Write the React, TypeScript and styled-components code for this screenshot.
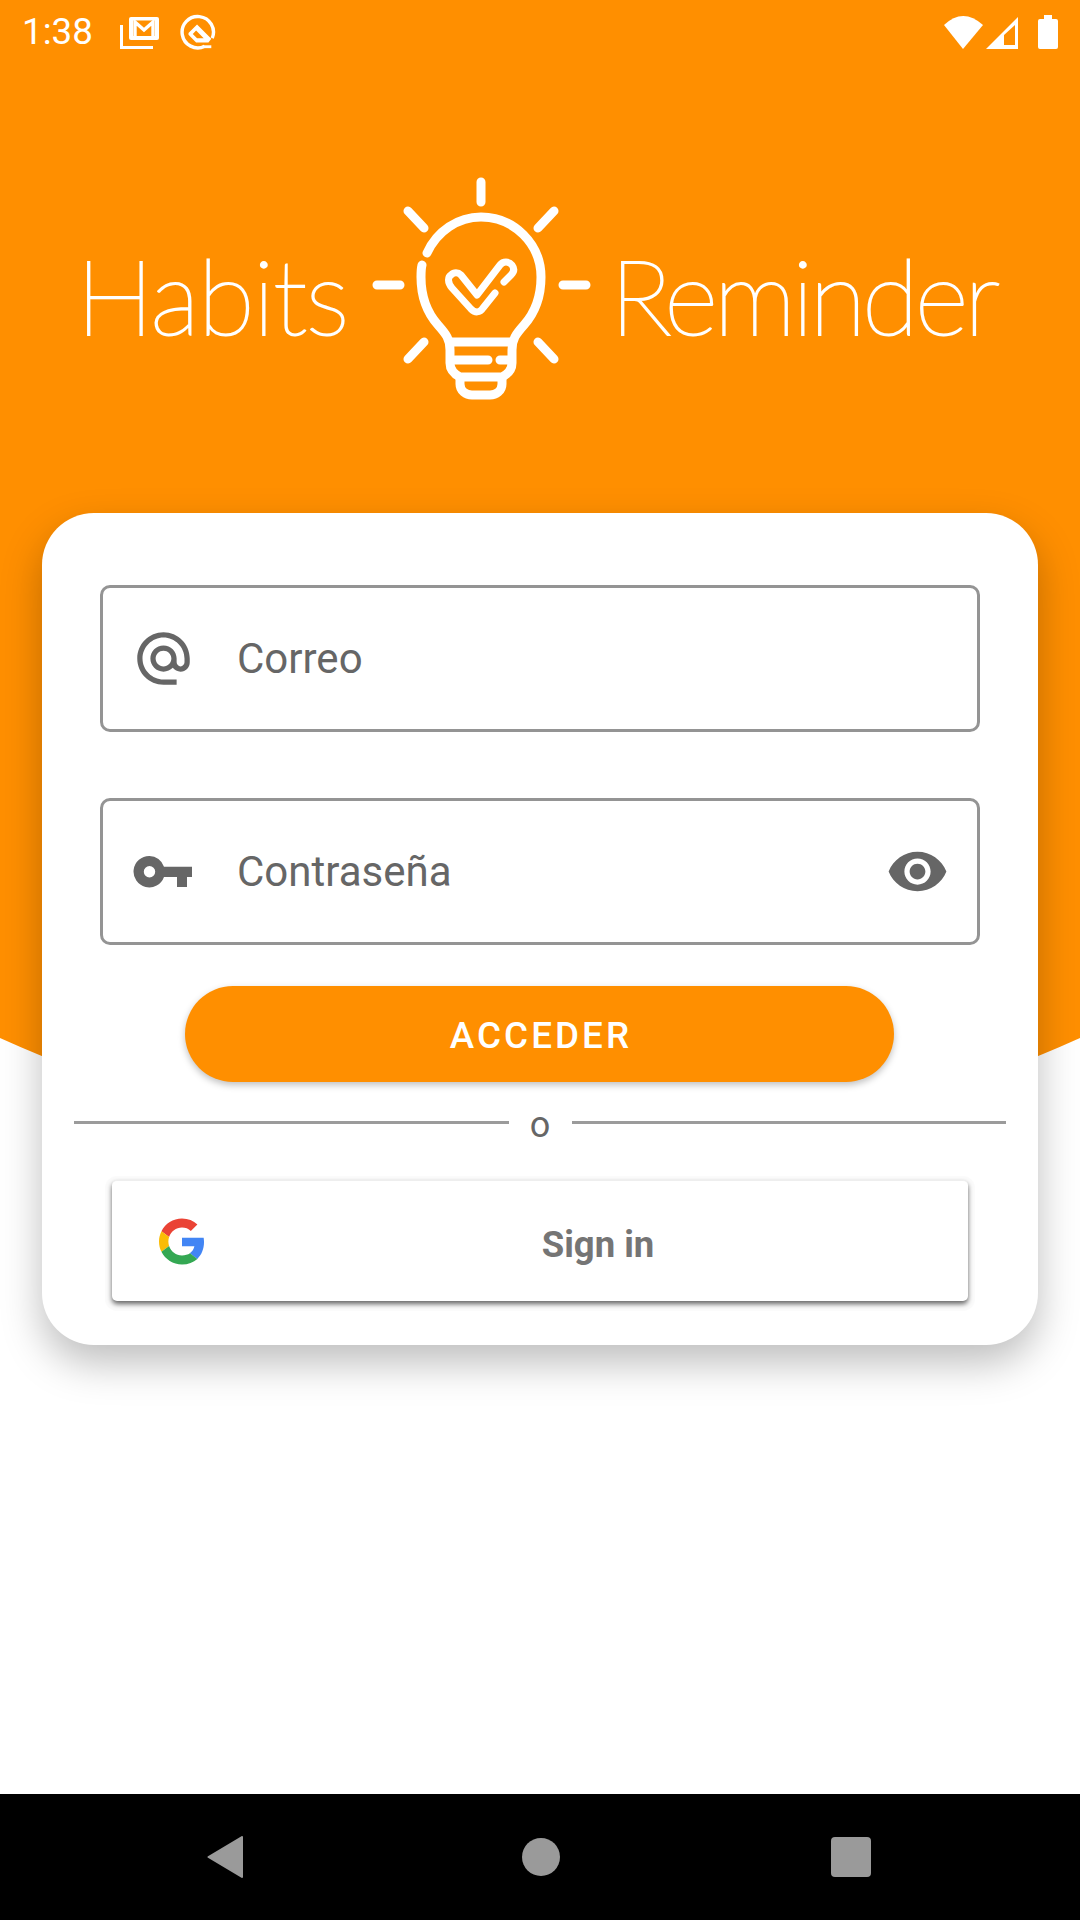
import React from "react";
import styled, { createGlobalStyle } from "styled-components";
import { MdAlternateEmail, MdVisibility } from "react-icons/md";

const Global = createGlobalStyle`
  html, body { margin: 0; padding: 0; background: #fff; }
  * { box-sizing: border-box; }
`;

const Page = styled.div`
  position: relative;
  width: 1080px;
  height: 1920px;
  overflow: hidden;
  display: flex;
  flex-direction: column;
  background: #fff;
  font-family: Roboto, "Liberation Sans", sans-serif;
`;

const Backdrop = styled.div`
  position: absolute;
  top: 0;
  left: -360px;
  width: 1800px;
  height: 1147px;
  background: #ff8f00;
  border-radius: 0 0 900px 900px / 0 0 545px 545px;
`;

const StatusBar = styled.div`
  position: relative;
  height: 63px;
  display: flex;
  align-items: center;
  padding: 0 21px 0 22px;
  color: #fff;
`;

const Clock = styled.span`
  font-size: 36.75px;
  line-height: 63px;
  width: 98px;
`;

const StatusIcon = styled.svg`
  display: block;
  flex: none;
`;

const Spring = styled.div`
  flex: 1;
`;

const Header = styled.div`
  position: relative;
  height: 450px;
  display: flex;
  align-items: flex-start;
  padding: 107px 0 0 76px;
`;

const Word = styled.div<{ $width: number; $gap?: number; $tracking: number }>`
  width: ${(p) => p.$width}px;
  margin-left: ${(p) => p.$gap ?? 0}px;
  margin-top: 62px;
  font-family: Lato, sans-serif;
  font-weight: 100;
  font-size: 104px;
  line-height: 125px;
  letter-spacing: ${(p) => p.$tracking}px;
  color: #fff;
  -webkit-text-stroke: 2px #fff;
  white-space: nowrap;
`;

const Card = styled.div`
  position: relative;
  margin: 0 42px;
  height: 832px;
  padding: 72px 58px 0;
  border-radius: 52px;
  background: #fff;
  box-shadow: 0 18px 40px rgba(0, 0, 0, 0.26);
`;

const Field = styled.div<{ $gap?: number }>`
  height: 147px;
  margin-top: ${(p) => p.$gap ?? 0}px;
  display: flex;
  align-items: center;
  padding: 0 28px 0 29px;
  border: 3px solid #949494;
  border-radius: 10px;
  color: #666;
  svg { flex: none; display: block; }
`;

const Hint = styled.span`
  flex: 1;
  margin-left: 42px;
  font-size: 42px;
  color: #666;
`;

const PrimaryButton = styled.button`
  display: block;
  width: 709px;
  height: 96px;
  margin: 41px 0 0 85px;
  padding: 2px 0 0 3px;
  border: 0;
  border-radius: 48px;
  background: #ff8f00;
  color: #fff;
  font-family: Roboto, sans-serif;
  font-weight: 500;
  font-size: 36.75px;
  letter-spacing: 3.1px;
  box-shadow: 0 3px 7px rgba(0, 0, 0, 0.25);
`;

const DividerRow = styled.div`
  display: flex;
  align-items: flex-start;
  height: 98px;
  margin: 0 -26px;
  padding-top: 39px;
`;

const Rule = styled.div`
  flex: 1;
  height: 3px;
  background: #9b9b9b;
`;

const Or = styled.span`
  width: 63px;
  margin-top: -17px;
  text-align: center;
  font-size: 36px;
  line-height: 42px;
  color: #666;
`;

const GoogleButton = styled.button`
  position: relative;
  display: flex;
  align-items: center;
  width: 856px;
  height: 121px;
  margin-left: 12px;
  padding: 0 0 0 47px;
  border: 0;
  border-top: 1px solid #eee;
  border-radius: 5px;
  background: #fff;
  box-shadow: 0 3px 5px rgba(0, 0, 0, 0.6), 0 3px 0 7px #fbfbfb;
`;

const GoogleLabel = styled.span`
  flex: 1;
  padding: 7px 0 0 23px;
  text-align: center;
  font-family: Roboto, sans-serif;
  font-weight: 700;
  font-size: 36.5px;
  color: #757575;
`;

const NavBar = styled.div`
  margin-top: auto;
  height: 126px;
  background: #000;
  display: flex;
  align-items: center;
  justify-content: space-between;
  padding: 0 209px 0 207px;
  position: relative;
`;

const HomeDot = styled.div`
  width: 38px;
  height: 38px;
  margin-left: 8px;
  border-radius: 50%;
  background: #9a9a9a;
`;

const RecentSquare = styled.div`
  width: 40px;
  height: 40px;
  border-radius: 4px;
  background: #9a9a9a;
`;

const BulbLogo = () => (
  <StatusIcon width="222" height="235" viewBox="370 170 222 235" fill="none" stroke="#fff" strokeWidth="9" strokeLinecap="round" strokeLinejoin="round">
    <path d="M481 182V202M408 211L424 228M554 211L538 228M377 285H400M563 285H586M424 342L408 359M538 342L554 359" />
    <path d="M427 253C437 231 458 217 481 217C514 217 541 244 541 277C541 300 532 316 524 325C516 334 512 339 512 350V363C512 370 508 374 502 377H460C454 374 450 370 450 363V350C450 339 446 334 438 325C430 316 421 300 421 277C421 273 421 269 422 265" />
    <path d="M450 342H512M455 360H488M500 360H510M460 378V384C460 391 466 395 472 395H490C496 395 502 391 502 384V378" />
    <path strokeWidth="7" d="M495 293L483 308C480 313 475 313 471 309L452 288C447 282 448 277 451 275C454 272 458 272 461 275L477 295L500 265C503 261 509 261 512 265C515 269 514 272 511 275L504 282" />
  </StatusIcon>
);

const KeyIcon = () => (
  <StatusIcon width="63" height="63" viewBox="0 0 63 63">
    <path
      fill="#666"
      fillRule="evenodd"
      d="M17.500 16A15.700 15.700 0 0 1 32 26.700H60V37H55V47H45V37H32A15.700 15.700 0 1 1 17.500 16ZM17.500 26A5.700 5.700 0 1 0 17.500 37.400A5.700 5.700 0 1 0 17.500 26Z"
    />
  </StatusIcon>
);

const GoogleG = () => (
  <StatusIcon width="46" height="47" viewBox="0 0 48 48">
    <path fill="#EA4335" d="M24 9.5c3.54 0 6.71 1.22 9.21 3.6l6.85-6.85C35.9 2.38 30.47 0 24 0 14.62 0 6.51 5.38 2.56 13.22l7.98 6.19C12.43 13.72 17.74 9.5 24 9.5z" />
    <path fill="#4285F4" d="M46.98 24.55c0-1.57-.15-3.09-.38-4.55H24v9.02h12.94c-.58 2.96-2.26 5.48-4.78 7.18l7.73 6c4.51-4.18 7.09-10.36 7.09-17.65z" />
    <path fill="#FBBC05" d="M10.53 28.59c-.48-1.45-.76-2.99-.76-4.59s.27-3.14.76-4.59l-7.98-6.19C.92 16.46 0 20.12 0 24c0 3.88.92 7.54 2.56 10.78l7.97-6.19z" />
    <path fill="#34A853" d="M24 48c6.48 0 11.93-2.13 16.03-5.81l-7.73-6c-2.15 1.45-4.92 2.3-8.3 2.3-6.26 0-11.57-4.22-13.47-9.91l-7.98 6.19C6.51 42.62 14.62 48 24 48z" />
  </StatusIcon>
);

export default function App() {
  return (
    <Page>
      <Global />
      <Backdrop />
      <StatusBar>
        <Clock>1:38</Clock>
        <StatusIcon width="40" height="34" viewBox="120 14 40 34">
          <path fill="none" stroke="#fff" strokeWidth="3" d="M121.5 24V46.5H153" />
          <rect x="129" y="16" width="30" height="23" rx="2" fill="#fff" />
          <rect x="133" y="19.500" width="22" height="15.500" fill="#ff8f00" />
          <path fill="none" stroke="#fff" strokeWidth="3.4" d="M135 35V21L144 29L153 21V35" />
        </StatusIcon>
        <StatusIcon width="38" height="38" viewBox="179 12 38 40" style={{ marginLeft: 19 }}>
          <path fill="none" stroke="#fff" strokeWidth="3.6" d="M205 47A16.5 16.5 0 1 1 213 38.5" />
          <path fill="#fff" fillRule="evenodd" d="M188 33L197 24L212 39L209 43H196L188 35ZM192.500 34L197 38.500H204L196 30.500Z" />
          <path fill="none" stroke="#fff" strokeWidth="3" d="M203 47.500H212" />
        </StatusIcon>
        <Spring />
        <StatusIcon width="42" height="36" viewBox="943 12 42 36" style={{ marginRight: 1, marginLeft: 1 }}>
          <path fill="#fff" d="M964 47L945 23Q964 5 984 23Z" />
        </StatusIcon>
        <StatusIcon width="34" height="36" viewBox="986 12 34 36">
          <path fill="#fff" fillRule="evenodd" d="M987 47L1019 15V47ZM1005 33V43H1016V23Z" />
        </StatusIcon>
        <StatusIcon width="22" height="36" viewBox="1038 13 22 36" style={{ marginLeft: 18 }}>
          <path fill="#fff" d="M1045 14H1053V18H1057Q1059 18 1059 20V46Q1059 48 1057 48H1041Q1039 48 1039 46V20Q1039 18 1041 18H1045Z" />
        </StatusIcon>
      </StatusBar>
      <Header>
        <Word $width={294} $tracking={-1.5}>Habits</Word>
        <BulbLogo />
        <Word $width={380} $gap={18} $tracking={-4}>Reminder</Word>
      </Header>
      <Card>
        <Field>
          <MdAlternateEmail size={63} />
          <Hint>Correo</Hint>
        </Field>
        <Field $gap={66}>
          <KeyIcon />
          <Hint>Contraseña</Hint>
          <MdVisibility size={63} />
        </Field>
        <PrimaryButton>ACCEDER</PrimaryButton>
        <DividerRow>
          <Rule />
          <Or>o</Or>
          <Rule />
        </DividerRow>
        <GoogleButton>
          <GoogleG />
          <GoogleLabel>Sign in</GoogleLabel>
        </GoogleButton>
      </Card>
      <NavBar>
        <StatusIcon width="36" height="42" viewBox="0 0 36 42">
          <path fill="#9a9a9a" stroke="#9a9a9a" strokeWidth="2" strokeLinejoin="round" d="M1.5 21L35 1V41Z" />
        </StatusIcon>
        <HomeDot />
        <RecentSquare />
      </NavBar>
    </Page>
  );
}
